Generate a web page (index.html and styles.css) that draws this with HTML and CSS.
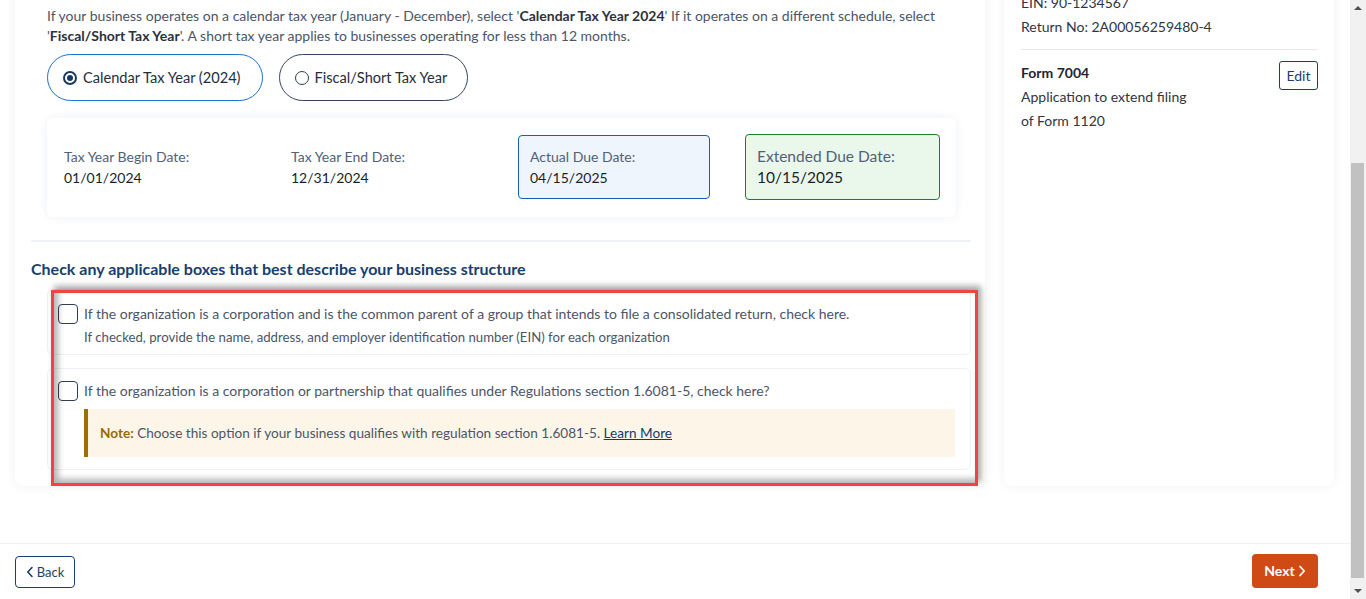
FILE: index.html
```html
<!DOCTYPE html>
<html lang="en">
<head>
    <meta charset="UTF-8">
    <meta name="viewport" content="width=device-width, initial-scale=1.0">
    <title>Form 7004 - Extension Details</title>
    <link rel="stylesheet" href="styles.css">
</head>
<body>
    <header class="topbar">
        <div class="brand">TaxExtend</div>
        <div class="topbar-links">Help &middot; My Account</div>
    </header>

    <main class="layout">
        <section class="main-card">
            <h2 class="card-title">Extension Details</h2>
            <p class="card-sub">Tell us about the tax period covered by this extension.</p>

            <div class="tax-year">
                <h3 class="section-title">Tax Year Information</h3>
                <p class="intro">If your business operates on a calendar tax year (January - December), select '<strong>Calendar Tax Year 2024</strong>' If it operates on a different schedule, select '<strong>Fiscal/Short Tax Year</strong>'. A short tax year applies to businesses operating for less than 12 months.</p>

                <div class="year-options">
                    <label class="pill pill-active"><span class="radio radio-on"></span>Calendar Tax Year (2024)</label>
                    <label class="pill"><span class="radio"></span>Fiscal/Short Tax Year</label>
                </div>

                <div class="dates">
                    <div class="date-item">
                        <div class="date-label">Tax Year Begin Date:</div>
                        <div class="date-value">01/01/2024</div>
                    </div>
                    <div class="date-item">
                        <div class="date-label">Tax Year End Date:</div>
                        <div class="date-value">12/31/2024</div>
                    </div>
                    <div class="date-item date-due">
                        <div class="date-label">Actual Due Date:</div>
                        <div class="date-value">04/15/2025</div>
                    </div>
                    <div class="date-item date-extended">
                        <div class="date-label">Extended Due Date:</div>
                        <div class="date-value">10/15/2025</div>
                    </div>
                </div>
            </div>

            <div class="structure">
                <h3 class="structure-title">Check any applicable boxes that best describe your business structure</h3>
                <div class="options">
                    <div class="option">
                        <div class="option-row">
                            <span class="checkbox"></span>
                            <div>
                                <div class="option-text">If the organization is a corporation and is the common parent of a group that intends to file a consolidated return, check here.</div>
                                <div class="option-hint">If checked, provide the name, address, and employer identification number (EIN) for each organization</div>
                            </div>
                        </div>
                    </div>
                    <div class="option">
                        <div class="option-row">
                            <span class="checkbox"></span>
                            <div class="option-text">If the organization is a corporation or partnership that qualifies under Regulations section 1.6081-5, check here?</div>
                        </div>
                        <div class="note"><strong>Note:</strong> Choose this option if your business qualifies with regulation section 1.6081-5. <a href="#">Learn More</a></div>
                    </div>
                    <div class="highlight"></div>
                </div>
            </div>
        </section>

        <aside class="summary">
            <h3 class="summary-title">Business Information</h3>
            <div class="summary-top">
                <div class="summary-line">Acme Holdings Inc.</div>
                <div class="summary-line">123 Market Street, Austin, TX</div>
                <div class="summary-line">EIN: 90-1234567</div>
                <div class="summary-line">Return No: 2A00056259480-4</div>
            </div>
            <div class="form-row">
                <div>
                    <div class="form-name">Form 7004</div>
                    <div class="summary-line">Application to extend filing</div>
                    <div class="summary-line">of Form 1120</div>
                </div>
                <button type="button" class="edit-btn">Edit</button>
            </div>
        </aside>
    </main>

    <footer class="actions">
        <button type="button" class="back-btn">
            <svg width="8" height="12" viewBox="0 0 8 12"><path d="M6 1.5 1.8 6 6 10.5" fill="none" stroke="currentColor" stroke-width="1.6" stroke-linecap="round" stroke-linejoin="round"/></svg>
            Back
        </button>
        <button type="button" class="next-btn">
            Next
            <svg width="8" height="12" viewBox="0 0 8 12"><path d="M2 1.5 6.2 6 2 10.5" fill="none" stroke="currentColor" stroke-width="1.8" stroke-linecap="round" stroke-linejoin="round"/></svg>
        </button>
    </footer>

    <div class="scrollbar">
        <span class="sb-arrow sb-up"></span>
        <span class="sb-thumb"></span>
        <span class="sb-arrow sb-down"></span>
    </div>
    <script src="script.js"></script>
</body>
</html>
```

FILE: styles.css
```css
* {
    box-sizing: border-box;
}
body {
    margin: 0 16px 0 0;
    font-family: Lato, "Liberation Sans", sans-serif;
    font-size: 14px;
    color: #4b5567;
    background-color: #fff;
}
.topbar {
    height: 64px;
    display: flex;
    align-items: center;
    justify-content: space-between;
    padding: 0 32px 0 15px;
    border-bottom: 1px solid #eef0f3;
}
.brand {
    font-size: 20px;
    font-weight: 700;
    color: #17406d;
}
.layout {
    display: grid;
    grid-template-columns: 970px 330px;
    gap: 19px;
    padding: 19px 16px 57px 15px;
}
.main-card, .summary {
    background-color: #fff;
    border-radius: 8px;
    box-shadow: 0 0 10px rgba(30, 60, 110, 0.07);
}
.main-card {
    padding: 16px 14px 16px 16px;
}
.card-title {
    margin: 0 0 6px;
    font-size: 20px;
    line-height: 28px;
    color: #17406d;
}
.card-sub {
    margin: 0 0 20px;
    line-height: 20px;
}
.tax-year {
    padding: 0 15px 23px 16px;
    border-bottom: 2px solid #eef2f6;
}
.section-title {
    margin: 0 0 10px;
    font-size: 16px;
    line-height: 22px;
    color: #17406d;
}
.intro {
    margin: 0;
    line-height: 20px;
}
.intro strong {
    color: #2b323d;
}
.year-options {
    display: flex;
    gap: 16px;
    margin-top: 8px;
}
.pill {
    height: 47px;
    display: inline-flex;
    align-items: center;
    gap: 6px;
    padding: 0 20px 0 15px;
    border: 1px solid #34465f;
    border-radius: 24px;
    color: #1f2d3d;
    font-size: 14.6px;
}
.pill-active {
    border-color: #1f6fd1;
    padding-right: 21px;
}
.radio {
    width: 14px;
    height: 14px;
    border: 1.5px solid #2c3e55;
    border-radius: 50%;
    display: inline-flex;
    align-items: center;
    justify-content: center;
}
.radio-on {
    border: 2px solid #1b3a5f;
}
.radio-on::after {
    content: "";
    width: 6px;
    height: 6px;
    border-radius: 50%;
    background-color: #1b3a5f;
}
.dates {
    margin-top: 17px;
    display: grid;
    grid-template-columns: repeat(4, 210px);
    column-gap: 17px;
    align-items: center;
    padding: 16px 17px 17px;
    border-radius: 6px;
    box-shadow: 0 0 10px rgba(30, 60, 110, 0.08);
}
.date-label {
    line-height: 21px;
    color: #536078;
}
.date-value {
    line-height: 21px;
    color: #1a1f29;
}
.date-due {
    width: 192px;
    padding: 10px 11px;
    background-color: #eef5fd;
    border: 1px solid #1a5db5;
    border-radius: 4px;
}
.date-extended {
    width: 195px;
    padding: 11px 11px;
    background-color: #eaf8ec;
    border: 1px solid #1e7d2a;
    border-radius: 4px;
}
.date-extended .date-label {
    font-size: 15.5px;
}
.date-extended .date-value {
    font-size: 15.5px;
}
.structure {
    padding-top: 17px;
}
.structure-title {
    margin: 0 0 10px;
    font-size: 16px;
    line-height: 20px;
    font-weight: 700;
    color: #17406d;
}
.options {
    position: relative;
    display: flex;
    flex-direction: column;
    gap: 13px;
    margin-left: 16px;
}
.option {
    border: 1px solid #edf1f6;
    border-radius: 6px;
    padding: 12px 15px 12px 10px;
}
.option:first-child {
    padding-top: 14px;
    padding-bottom: 7px;
}
.option-row {
    display: flex;
    gap: 6px;
}
.checkbox {
    flex-shrink: 0;
    width: 20px;
    height: 20px;
    border: 1.5px solid #2f3e55;
    border-radius: 4px;
}
.option-text {
    line-height: 20px;
}
.option-hint {
    margin-top: 3px;
    font-size: 13.2px;
    line-height: 20px;
}
.note {
    margin: 8px 0 0 26px;
    padding: 14px 12px;
    font-size: 13.6px;
    line-height: 20px;
    background-color: #fdf6e8;
    border-left: 4px solid #9c6f00;
}
.note strong {
    color: #9a6a00;
}
.note a {
    color: #143b66;
}
.highlight {
    position: absolute;
    top: 1px;
    left: 4px;
    right: -7px;
    bottom: -16px;
    border: 3px solid #f04444;
    box-shadow: 3px -4px 6px rgba(0, 0, 0, 0.35), inset 4px -4px 6px rgba(0, 0, 0, 0.3);
    pointer-events: none;
}
.summary {
    padding: 17px 16px 17px 17px;
    color: #2d3644;
}
.summary-title {
    margin: 0 0 20px;
    font-size: 16px;
    line-height: 22px;
    color: #1f2d3d;
}
.summary-line {
    line-height: 24px;
}
.summary-top {
    padding-bottom: 10px;
    border-bottom: 1px solid #e5e8ec;
}
.form-row {
    display: flex;
    justify-content: space-between;
    align-items: flex-start;
    padding-top: 11px;
}
.form-name {
    line-height: 24px;
    font-weight: 700;
    color: #1f2530;
}
.edit-btn {
    width: 39px;
    height: 29px;
    padding: 0;
    border: 1px solid #1d3e6a;
    border-radius: 3px;
    background-color: #fff;
    color: #1d3e6a;
    font-family: inherit;
    font-size: 14px;
}
.actions {
    height: 56px;
    display: flex;
    justify-content: space-between;
    align-items: center;
    padding: 0 32px 0 15px;
    border-top: 1px solid #eef0f3;
}
.back-btn, .next-btn {
    display: inline-flex;
    align-items: center;
    justify-content: center;
    gap: 3px;
    font-family: inherit;
    border-radius: 4px;
    cursor: pointer;
}
.back-btn {
    width: 60px;
    height: 32px;
    border: 1px solid #1d3e6a;
    background-color: #fff;
    color: #1d3e6a;
    font-size: 13px;
}
.next-btn {
    width: 66px;
    height: 34px;
    margin-bottom: 2px;
    border: none;
    background-color: #cf4a14;
    color: #fff;
    font-size: 14px;
    font-weight: 700;
}
/* classic window scrollbar, scrolled to the end */
.scrollbar {
    position: fixed;
    top: 0;
    right: 0;
    width: 16px;
    height: 100vh;
    background-color: #f1f1f1;
}
.sb-thumb {
    position: absolute;
    top: 163px;
    bottom: 21px;
    left: 1px;
    right: 2px;
    background-color: #c1c1c1;
}
.sb-arrow {
    position: absolute;
    left: 4px;
    width: 0;
    height: 0;
    border-left: 4px solid transparent;
    border-right: 4px solid transparent;
}
.sb-up {
    top: 6px;
    border-bottom: 4px solid #505050;
}
.sb-down {
    bottom: 6px;
    border-top: 4px solid #505050;
}
```

FILE: script.js
```js
// open the page at the bottom of the form
window.scrollTo(0, document.documentElement.scrollHeight);
window.addEventListener('load', function() {
    window.scrollTo(0, document.documentElement.scrollHeight);
});
```
